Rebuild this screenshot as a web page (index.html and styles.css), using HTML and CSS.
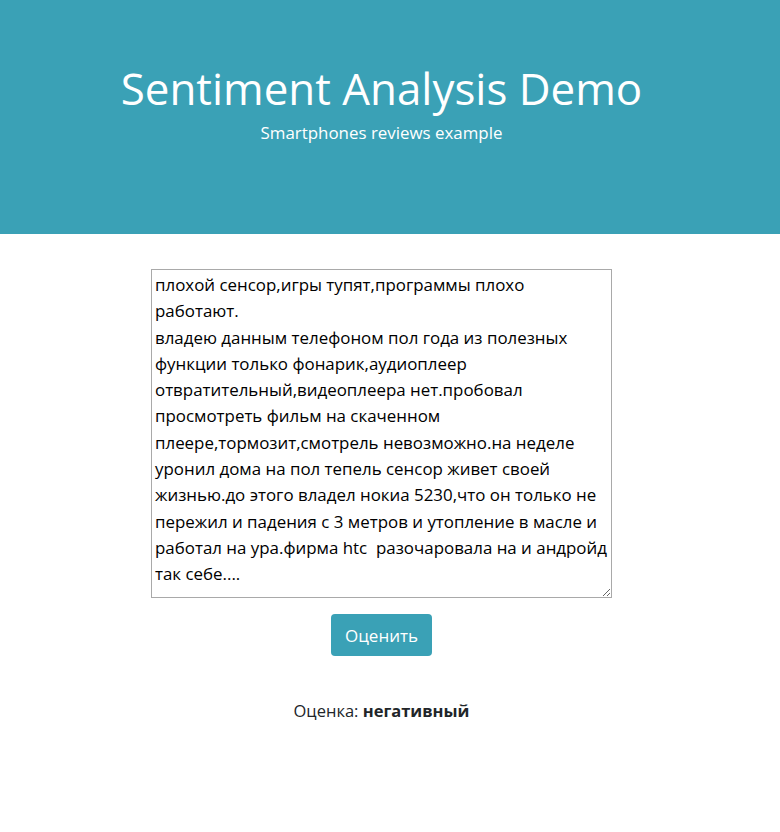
FILE: index.html
```html
<!DOCTYPE html>
<html lang="ru">
<head>
<meta charset="utf-8">
<title>Sentiment Analysis Demo</title>
<link rel="stylesheet" href="styles.css">
</head>
<body>
<header class="hero">
  <h1 class="hero-title">Sentiment Analysis Demo</h1>
  <p class="hero-sub">Smartphones reviews example</p>
</header>
<main class="content">
  <form class="review-form">
    <textarea class="review-input">плохой сенсор,игры тупят,программы плохо работают.
владею данным телефоном пол года из полезных функции только фонарик,аудиоплеер отвратительный,видеоплеера нет.пробовал просмотреть фильм на скаченном плеере,тормозит,смотрель невозможно.на неделе уронил дома на пол тепель сенсор живет своей жизнью.до этого владел нокиа 5230,что он только не пережил и падения с 3 метров и утопление в масле и работал на ура.фирма htc  разочаровала на и андройд так себе....</textarea>
    <button type="button" class="btn">Оценить</button>
  </form>
  <p class="result">Оценка: <b>негативный</b></p>
</main>
</body>
</html>
```
FILE: styles.css
```css
* { box-sizing: border-box; }
html, body {
  margin: 0;
  padding: 0;
  background: #fff;
  font-family: "Open Sans", "Noto Sans", sans-serif;
  color: #212529;
}
.hero {
  background: #3aa1b6;
  height: 234px;
  display: flex;
  flex-direction: column;
  align-items: center;
  padding: 56px 17px 0 0;
  color: #fff;
}
.hero-title {
  margin: 0;
  font-size: 43.9px;
  font-weight: 400;
  line-height: 64px;
}
.hero-sub {
  margin: 1px 0 0;
  font-size: 16.9px;
  line-height: 24px;
}
.content {
  display: flex;
  flex-direction: column;
  align-items: center;
  padding: 35px 17px 0 0;
}
.review-form {
  display: flex;
  flex-direction: column;
  align-items: center;
}
.review-input {
  width: 461px;
  height: 329px;
  border: 1px solid #a9a9a9;
  padding: 2px 3px;
  font-family: "Open Sans", "Noto Sans", sans-serif;
  font-size: 16.9px;
  line-height: 26.3px;
  color: #000;
  resize: both;
}
.btn {
  margin-top: 16px;
  width: 101px;
  height: 42px;
  background: #3aa1b6;
  border: none;
  border-radius: 4px;
  color: #fff;
  font-family: "Open Sans", "Noto Sans", sans-serif;
  font-size: 17px;
}
.result {
  margin: 43px 0 0;
  font-size: 16.5px;
  line-height: 24px;
}
```
